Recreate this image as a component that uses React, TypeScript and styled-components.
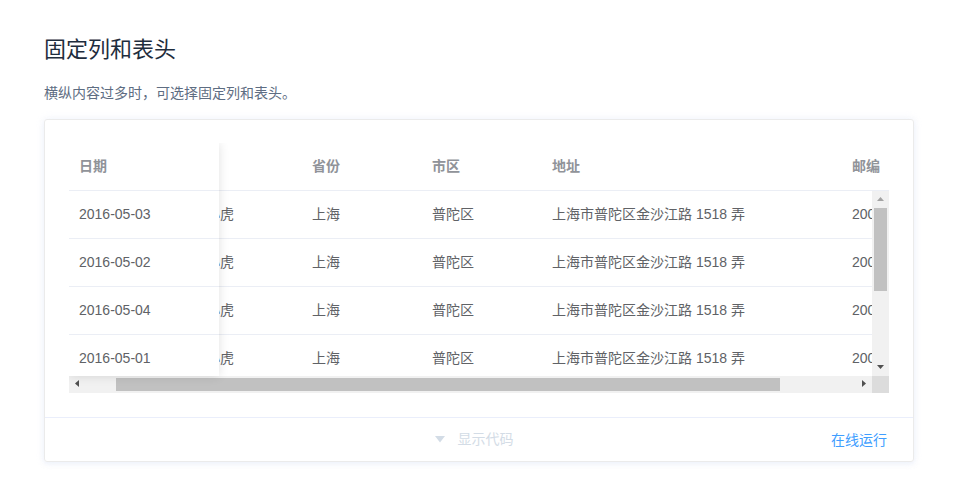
import React from "react";
import styled, { createGlobalStyle } from "styled-components";

const Global = createGlobalStyle`
  html, body { margin: 0; padding: 0; background: #fff; }
  body { font-family: "Liberation Sans", Arial, "Noto Sans CJK SC", sans-serif; }
`;

const Page = styled.main`
  width: 957px;
  height: 493px;
  box-sizing: border-box;
  padding: 36px 43px 0 44px;
  overflow: hidden;
`;
const Title = styled.h3`
  margin: 0;
  font-size: 22px;
  font-weight: 400;
  line-height: 28px;
  color: #1f2d3d;
`;
const Description = styled.p`
  margin: 15px 0 0;
  font-size: 14px;
  line-height: 28px;
  color: #5e6d82;
`;
const Card = styled.section`
  margin-top: 12px;
  height: 343px;
  box-sizing: border-box;
  border: 1px solid #ebebeb;
  border-radius: 3px;
  box-shadow: 0 0 8px 0 rgba(232, 237, 250, 0.6), 0 2px 4px 0 rgba(232, 237, 250, 0.5);
  display: flex;
  flex-direction: column;
`;
const Source = styled.div`
  flex: 1;
  padding: 23px 24px 0;
`;
const TableBox = styled.div`
  position: relative;
  width: 820px;
  height: 250px;
  overflow: hidden;
  font-size: 14px;
`;
const HeadClip = styled.div`
  width: 820px;
  height: 48px;
  overflow: hidden;
`;
const BodyArea = styled.div`
  display: flex;
  height: 185px;
`;
const BodyClip = styled.div`
  width: 803px;
  height: 185px;
  overflow: hidden;
`;
const Track = styled.div<{ $offset?: number }>`
  width: 930px;
  margin-left: ${(p) => -(p.$offset ?? 0)}px;
`;
const Row = styled.div<{ $head?: boolean }>`
  display: flex;
  height: 48px;
  box-sizing: border-box;
  border-bottom: 1px solid #ebeef5;
  align-items: center;
  padding-bottom: ${(p) => (p.$head ? 1 : 0)}px;
  color: ${(p) => (p.$head ? "#909399" : "#606266")};
  font-weight: ${(p) => (p.$head ? 700 : 400)};
`;
const Cell = styled.div<{ $w: number }>`
  flex: 0 0 ${(p) => p.$w}px;
  box-sizing: border-box;
  padding: 0 10px;
  line-height: 23px;
  white-space: nowrap;
  overflow: hidden;
`;
const FixedColumn = styled.div`
  position: absolute;
  left: 0;
  top: 0;
  width: 150px;
  height: 233px;
  overflow: hidden;
  background: #fff;
  box-shadow: 0 0 10px rgba(0, 0, 0, 0.12);
`;
const VBar = styled.div`
  position: relative;
  flex: 0 0 17px;
  background: #f1f1f1;
`;
const VThumb = styled.div`
  position: absolute;
  left: 2px;
  top: 17px;
  width: 13px;
  height: 83px;
  background: #c1c1c1;
`;
const HBar = styled.div`
  display: flex;
  height: 17px;
`;
const HRail = styled.div`
  position: relative;
  width: 803px;
  background: #f1f1f1;
`;
const HThumb = styled.div`
  position: absolute;
  left: 47px;
  top: 2px;
  width: 664px;
  height: 13px;
  background: #c1c1c1;
`;
const Corner = styled.div`
  width: 17px;
  background: #dcdcdc;
`;
const ArrowIcon = styled.svg<{ $x: number; $y: number }>`
  position: absolute;
  width: 7px;
  height: 7px;
  left: ${(p) => p.$x}px;
  top: ${(p) => p.$y}px;
`;
const Footer = styled.div`
  height: 44px;
  box-sizing: border-box;
  border-top: 1px solid #eaeefb;
  position: relative;
  display: flex;
  align-items: center;
  justify-content: center;
  font-size: 14px;
`;
const Toggle = styled.div`
  display: flex;
  align-items: center;
  gap: 13px;
  color: #d3dce6;
  line-height: 20px;
  margin: -1px 0 0 -10px;
`;
const RunLink = styled.a`
  position: absolute;
  right: 26px;
  top: 12px;
  color: #409eff;
  font-size: 14px;
  line-height: 20px;
`;

const columns = [150, 120, 120, 120, 300, 120];
const head = ["日期", "姓名", "省份", "市区", "地址", "邮编"];
const rows = ["2016-05-03", "2016-05-02", "2016-05-04", "2016-05-01", "2016-05-08"];
const OFFSET = 37;

const rowCells = (d: string) => [d, "王小虎", "上海", "普陀区", "上海市普陀区金沙江路 1518 弄", "200333"];

const Arrow = ({ points, fill, x, y }: { points: string; fill: string; x: number; y: number }) => (
  <ArrowIcon $x={x} $y={y} viewBox="0 0 7 7">
    <polygon points={points} fill={fill} />
  </ArrowIcon>
);

export default function App() {
  return (
    <Page>
      <Global />
      <Title>固定列和表头</Title>
      <Description>{"横纵内容过多时\uFF0C可选择固定列和表头。"}</Description>
      <Card>
        <Source>
          <TableBox>
            <HeadClip>
              <Track $offset={OFFSET}>
                <Row $head>
                  {head.map((h, i) => (
                    <Cell key={h} $w={columns[i]}>{h}</Cell>
                  ))}
                </Row>
              </Track>
            </HeadClip>
            <BodyArea>
              <BodyClip>
                <Track $offset={OFFSET}>
                  {rows.map((d) => (
                    <Row key={d}>
                      {rowCells(d).map((c, i) => (
                        <Cell key={i} $w={columns[i]}>{c}</Cell>
                      ))}
                    </Row>
                  ))}
                </Track>
              </BodyClip>
              <VBar>
                <Arrow x={5} y={5} points="0,5 3.5,1 7,5" fill="#a3a3a3" />
                <VThumb />
                <Arrow x={5} y={172} points="0,2 7,2 3.5,6" fill="#505050" />
              </VBar>
            </BodyArea>
            <HBar>
              <HRail>
                <Arrow x={5} y={4} points="5,0 5,7 1,3.5" fill="#505050" />
                <HThumb />
                <Arrow x={791} y={4} points="2,0 2,7 6,3.5" fill="#505050" />
              </HRail>
              <Corner />
            </HBar>
            <FixedColumn>
              <Row $head><Cell $w={150}>日期</Cell></Row>
              {rows.slice(0, 4).map((d) => (
                <Row key={d}><Cell $w={150}>{d}</Cell></Row>
              ))}
            </FixedColumn>
          </TableBox>
        </Source>
        <Footer>
          <Toggle>
            <svg width="10" height="7" viewBox="0 0 10 7"><polygon points="0,0 10,0 5,6.5" fill="#d3dce6" /></svg>
            <span>显示代码</span>
          </Toggle>
          <RunLink>在线运行</RunLink>
        </Footer>
      </Card>
    </Page>
  );
}
